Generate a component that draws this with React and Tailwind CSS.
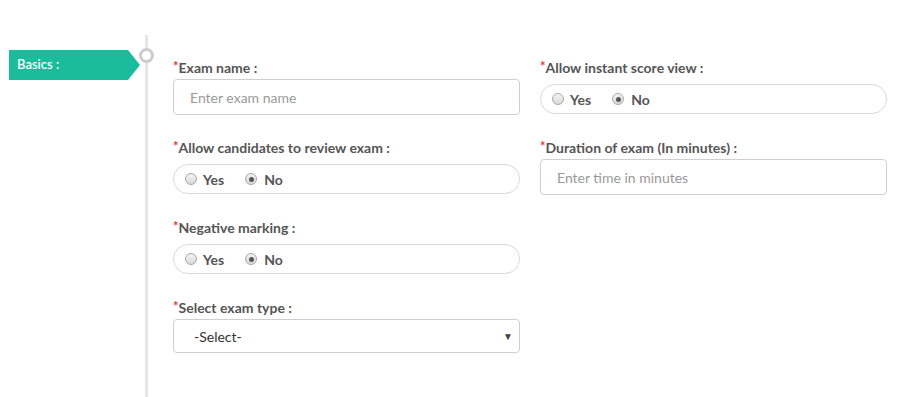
import React from "react";

function Label({ children }) {
  return (
    <div className="h-[18px] leading-[18px] mb-[2px] text-[14px] font-bold text-[#555] whitespace-nowrap">
      <span className="text-[#e53935] text-[13px] font-bold relative top-[-2px]">*</span>
      {children}
    </div>
  );
}

function Radio({ checked }) {
  return (
    <span className="relative inline-flex items-center justify-center w-[12px] h-[12px] rounded-full border border-[#a8a8a8] bg-gradient-to-b from-[#f4f4f4] to-[#d9d9d9]">
      {checked && <span className="w-[5px] h-[5px] rounded-full bg-[#555]" />}
    </span>
  );
}

function RadioGroup() {
  return (
    <div className="h-[36px] pt-[5px] pb-[1px]">
      <div className="h-[30px] rounded-full border border-[#d9d9d9] flex items-center pl-[11px] text-[14px] font-bold text-[#555]">
        <Radio />
        <span className="ml-[6px]">Yes</span>
        <span className="ml-[21px] flex items-center">
          <Radio checked />
        </span>
        <span className="ml-[7px]">No</span>
      </div>
    </div>
  );
}

function TextInput({ placeholder }) {
  return (
    <div className="h-[36px] rounded-[4px] border border-[#cfcfcf] flex items-center pl-[16px] text-[14px] text-[#999]">
      {placeholder}
    </div>
  );
}

function Field({ label, children }) {
  return (
    <div>
      <Label>{label}</Label>
      {children}
    </div>
  );
}

export default function App() {
  return (
    <div className="w-[901px] h-[397px] bg-white overflow-hidden" style={{ fontFamily: "Lato, 'Open Sans', sans-serif" }}>
      <div className="flex pt-[35px] h-full">
        <div className="w-[145px] pl-[9px] pt-[15px] shrink-0">
          <div
            className="w-[131px] h-[30px] bg-[#1abc9c] text-white text-[13px] font-semibold flex items-center pl-[8px]"
            style={{ clipPath: "polygon(0 0, 119px 0, 131px 50%, 119px 100%, 0 100%)" }}
          >
            Basics :
          </div>
        </div>
        <div className="relative border-l-[3px] border-[#e6e6e6] pl-[25px] pr-[14px] pt-[24px] flex-1">
          <div className="absolute left-[-9px] top-[13px] w-[15px] h-[15px] rounded-full border-[3px] border-[#cccccc] bg-white" />
          <div className="grid grid-cols-[347px_347px] gap-x-[20px]">
            <div className="flex flex-col gap-y-[24px]">
              <Field label="Exam name :">
                <TextInput placeholder="Enter exam name" />
              </Field>
              <Field label="Allow candidates to review exam :">
                <RadioGroup />
              </Field>
              <Field label="Negative marking :">
                <RadioGroup />
              </Field>
              <Field label="Select exam type :">
                <div className="h-[34px] rounded-[4px] border border-[#cfcfcf] flex items-center pl-[20px] pr-[6px] text-[14px] text-[#333]">
                  <span className="flex-1">-Select-</span>
                  <span className="text-[10px] text-[#444]">▼</span>
                </div>
              </Field>
            </div>
            <div className="flex flex-col gap-y-[24px]">
              <Field label="Allow instant score view :">
                <RadioGroup />
              </Field>
              <Field label="Duration of exam (In minutes) :">
                <TextInput placeholder="Enter time in minutes" />
              </Field>
            </div>
          </div>
        </div>
      </div>
    </div>
  );
}
